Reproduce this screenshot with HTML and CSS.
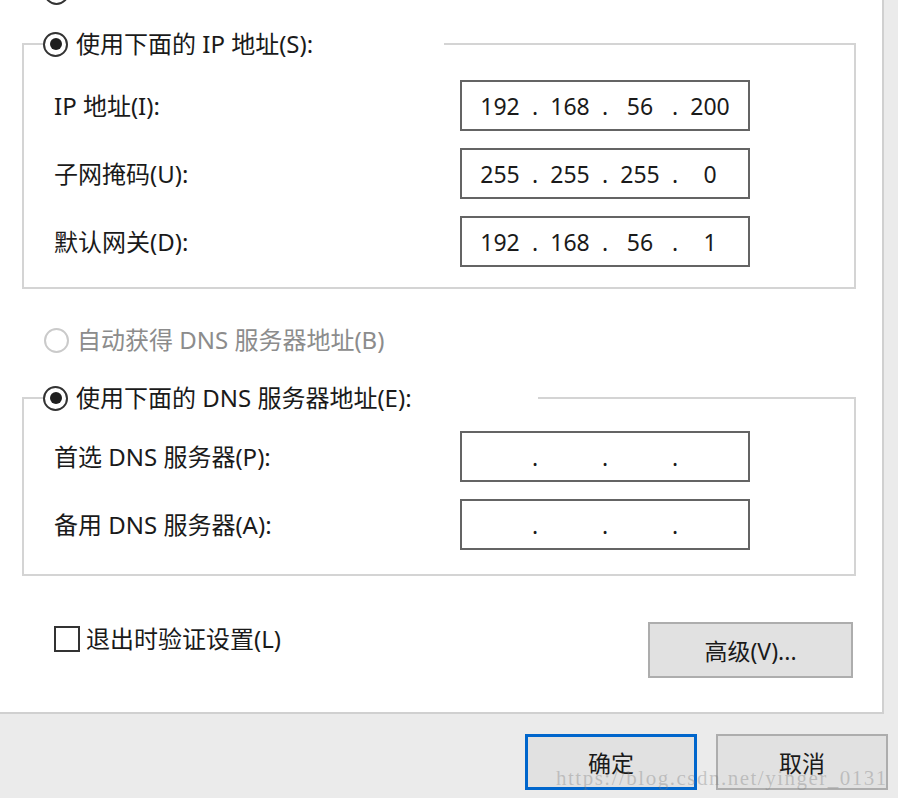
FILE: index.html
```html
<!DOCTYPE html>
<html lang="zh-CN">

<head>
    <meta charset="UTF-8">
    <title>Internet 协议版本 4 (TCP/IPv4) 属性</title>
    <link rel="stylesheet" href="styles.css">
</head>

<body>
    <div class="panel">
        <div class="stub-row">
            <span class="radio"></span>
        </div>

        <fieldset class="group group-ip">
            <legend class="group-title title-ip">
                <span class="radio checked"></span>
                <span>使用下面的 IP 地址(S):</span>
            </legend>

            <div class="field-row">
                <label class="field-label">IP 地址(I):</label>
                <div class="ip-box">
                    <span class="octet">192</span><span class="dot">.</span><span class="octet">168</span><span class="dot">.</span><span class="octet">56</span><span class="dot">.</span><span class="octet">200</span>
                </div>
            </div>
            <div class="field-row">
                <label class="field-label">子网掩码(U):</label>
                <div class="ip-box">
                    <span class="octet">255</span><span class="dot">.</span><span class="octet">255</span><span class="dot">.</span><span class="octet">255</span><span class="dot">.</span><span class="octet">0</span>
                </div>
            </div>
            <div class="field-row">
                <label class="field-label">默认网关(D):</label>
                <div class="ip-box">
                    <span class="octet">192</span><span class="dot">.</span><span class="octet">168</span><span class="dot">.</span><span class="octet">56</span><span class="dot">.</span><span class="octet">1</span>
                </div>
            </div>
        </fieldset>

        <div class="option-row disabled">
            <span class="radio"></span>
            <span>自动获得 DNS 服务器地址(B)</span>
        </div>

        <fieldset class="group group-dns">
            <legend class="group-title title-dns">
                <span class="radio checked"></span>
                <span>使用下面的 DNS 服务器地址(E):</span>
            </legend>

            <div class="field-row">
                <label class="field-label">首选 DNS 服务器(P):</label>
                <div class="ip-box">
                    <span class="octet"></span><span class="dot">.</span><span class="octet"></span><span class="dot">.</span><span class="octet"></span><span class="dot">.</span><span class="octet"></span>
                </div>
            </div>
            <div class="field-row">
                <label class="field-label">备用 DNS 服务器(A):</label>
                <div class="ip-box">
                    <span class="octet"></span><span class="dot">.</span><span class="octet"></span><span class="dot">.</span><span class="octet"></span><span class="dot">.</span><span class="octet"></span>
                </div>
            </div>
        </fieldset>

        <div class="bottom-row">
            <label class="check-row">
                <span class="checkbox"></span>
                <span>退出时验证设置(L)</span>
            </label>
            <button class="btn btn-advanced">高级(V)...</button>
        </div>
    </div>

    <div class="footer">
        <button class="btn btn-default">确定</button>
        <button class="btn">取消</button>
    </div>

    <div class="watermark">https://blog.csdn.net/yinger_0131</div>
</body>

</html>
```

FILE: styles.css
```css
/* 全局样式 */
* {
    margin: 0;
    padding: 0;
    box-sizing: border-box;
}

body {
    background-color: #ebebeb;
    color: #1a1a1a;
    font-family: "Noto Sans", "Noto Sans CJK SC", sans-serif;
    font-size: 24px;
    line-height: 32px;
    width: 898px;
    height: 798px;
    overflow: hidden;
    position: relative;
}

/* 白色属性页 */
.panel {
    width: 884px;
    height: 714px;
    background-color: #fff;
    border-right: 2px solid #d0d0d0;
    border-bottom: 2px solid #d0d0d0;
    padding-left: 22px;
    overflow: hidden;
}

.stub-row {
    margin-top: -20px;
    padding-left: 22px;
    height: 24px;
}

/* 单选 / 复选框 */
.radio {
    display: inline-block;
    flex: 0 0 auto;
    width: 25px;
    height: 25px;
    border: 2px solid #333;
    border-radius: 50%;
    position: relative;
    background-color: #fff;
}

.radio.checked::after {
    content: "";
    position: absolute;
    left: 4.5px;
    top: 4.5px;
    width: 12px;
    height: 12px;
    border-radius: 50%;
    background-color: #1f1f1f;
}

.checkbox {
    display: inline-block;
    flex: 0 0 auto;
    width: 26px;
    height: 26px;
    border: 2px solid #333;
    background-color: #fff;
}

/* 分组框 */
.group {
    width: 834px;
    border: 2px solid #d4d4d4;
    padding: 20px 19px 20px 19px;
}

.group-ip {
    margin-top: 24px;
}

.group-dns {
    padding-top: 17px;
    padding-bottom: 24px;
}

.group-title {
    display: flex;
    align-items: center;
    gap: 8px;
    padding: 0;
    height: 32px;
}

.title-ip {
    width: 401px;
}

.title-dns {
    width: 495px;
}

.field-row {
    display: flex;
    align-items: center;
    padding-left: 11px;
}

.field-row + .field-row {
    margin-top: 17px;
}

.field-label {
    width: 406px;
}

.ip-box {
    display: flex;
    align-items: center;
    width: 290px;
    height: 51px;
    border: 2px solid #646464;
    padding-left: 8px;
    font-size: 23px;
}

.octet {
    width: 60px;
    text-align: center;
}

.dot {
    width: 10px;
    text-align: center;
}

.option-row {
    display: flex;
    align-items: center;
    gap: 8px;
    height: 32px;
    margin: 35px 0 26px 22px;
}

.option-row.disabled {
    color: #8c8c8c;
}

.option-row.disabled .radio {
    border-color: #cacaca;
}

/* 底部行 */
.bottom-row {
    display: flex;
    justify-content: space-between;
    align-items: flex-start;
    width: 799px;
    margin: 46px 0 0 32px;
}

.check-row {
    display: flex;
    align-items: center;
    gap: 6px;
    margin-top: 1px;
}

.btn {
    font-family: inherit;
    font-size: 23px;
    color: #1a1a1a;
    background-color: #e1e1e1;
    border: 2px solid #adadad;
    width: 172px;
    height: 56px;
}

.btn-advanced {
    width: 205px;
}

.btn-default {
    border: 3px solid #0066cc;
}

.footer {
    display: flex;
    justify-content: flex-end;
    gap: 19px;
    padding: 20px 10px 0 0;
}

.watermark {
    position: absolute;
    left: 556px;
    top: 762px;
    font-family: "Liberation Serif", serif;
    font-size: 21px;
    letter-spacing: 1.5px;
    color: rgba(120, 120, 120, 0.35);
    white-space: nowrap;
}
```
